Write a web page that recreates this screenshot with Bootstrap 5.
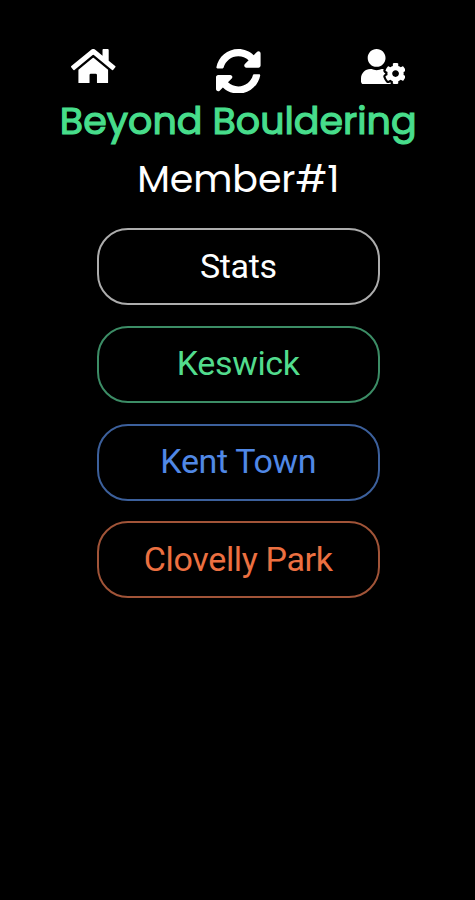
<!DOCTYPE html>
<html lang="en">
<head>
<meta charset="utf-8">
<meta name="viewport" content="width=device-width, initial-scale=1">
<title>Beyond Bouldering</title>
<link href="https://cdn.jsdelivr.net/npm/bootstrap@5.3.0/dist/css/bootstrap.min.css" rel="stylesheet">
<style>
body { background: #000; color: #fff; font-family: Roboto, sans-serif; }
main { padding-left: 1.5px; }
.top-icons { width: 334px; padding-top: 48.7px; height: 98px; }
.top-icons svg { display: block; fill: #fff; }
.brand-title, .member-name { font-family: Poppins, Inter, sans-serif; white-space: nowrap; }
.brand-title { font-size: 38px; font-weight: 400; line-height: 46px; color: #47dd8b; -webkit-text-stroke: 1.2px #47dd8b; }
.member-name { font-size: 38px; font-weight: 400; line-height: 46px; margin-top: 12px; letter-spacing: -.1px; }
.gyms { width: 283px; gap: 20.8px; margin-top: 26px; }
.gym-btn { --bs-btn-color: var(--tone); --bs-btn-border-color: var(--edge); --bs-btn-hover-color: #000; --bs-btn-hover-bg: var(--tone);
  height: 77px; border-width: 2px; border-radius: 31px; font-size: 34px; line-height: 1; letter-spacing: -.35px; }
.gym-btn span { display: block; padding-bottom: 2px; }
.tone-white { --tone: #fff; --edge: #adadad; }
.tone-green { --tone: #52dc8d; --edge: #3c8d66; }
.tone-blue { --tone: #5088e6; --edge: #3c609c; }
.tone-orange { --tone: #ec7041; --edge: #a15438; }
</style>
</head>
<body>
<main class="d-flex flex-column align-items-center min-vh-100">
  <nav class="top-icons d-flex justify-content-between align-items-start">
    <a href="#" aria-label="Home"><svg width="44.5" height="34.8" viewBox="0 32 576 448"><path d="M280.37 148.26L96 300.11V464a16 16 0 0 0 16 16l112.06-.29a16 16 0 0 0 15.92-16V368a16 16 0 0 1 16-16h64a16 16 0 0 1 16 16v95.64a16 16 0 0 0 16 16.05L464 480a16 16 0 0 0 16-16V300L295.67 148.26a12.19 12.19 0 0 0-15.3 0zM571.6 251.47L488 182.56V44.05a12 12 0 0 0-12-12h-56a12 12 0 0 0-12 12v72.61L318.47 43a48 48 0 0 0-61 0L4.34 251.47a12 12 0 0 0-1.6 16.9l25.5 31A12 12 0 0 0 45.15 301l235.22-193.74a12.19 12.19 0 0 1 15.3 0L530.9 301a12 12 0 0 0 16.9-1.6l25.5-31a12 12 0 0 0-1.7-16.93z"/></svg></a>
    <a href="#" aria-label="Refresh"><svg width="44.6" height="44.6" viewBox="8 8 496 496"><path d="M370.72 133.28C339.458 104.008 298.888 87.962 255.848 88c-77.458.068-144.328 53.178-162.791 126.85-1.344 5.363-6.122 9.15-11.651 9.15H24.103c-7.498 0-13.194-6.807-11.807-14.176C33.933 94.924 134.813 8 256 8c66.448 0 126.791 26.136 171.315 68.685L463.03 40.97C478.149 25.851 504 36.559 504 57.941V192c0 13.255-10.745 24-24 24H345.941c-21.382 0-32.09-25.851-16.971-40.971l41.75-41.749zM32 296h134.059c21.382 0 32.09 25.851 16.971 40.971l-41.75 41.75c31.262 29.273 71.835 45.319 114.876 45.28 77.418-.07 144.315-53.144 162.787-126.849 1.344-5.363 6.122-9.15 11.651-9.15h57.304c7.498 0 13.194 6.807 11.807 14.176C478.067 417.076 377.187 504 256 504c-66.448 0-126.791-26.136-171.315-68.685L48.97 471.03C33.851 486.149 8 475.441 8 454.059V320c0-13.255 10.745-24 24-24z"/></svg></a>
    <a href="#" aria-label="Account settings"><svg width="44.6" height="35.7" viewBox="0 0 640 512"><path d="M610.5 373.3c2.6-14.1 2.6-28.5 0-42.6l25.8-14.9c3-1.7 4.3-5.2 3.3-8.5-6.7-21.6-18.2-41.2-33.2-57.4-2.3-2.5-6-3.1-9-1.4l-25.8 14.9c-10.9-9.3-23.4-16.5-36.9-21.3v-29.8c0-3.4-2.4-6.4-5.7-7.1-22.3-5-45-4.8-66.2 0-3.3.7-5.7 3.7-5.7 7.1v29.8c-13.5 4.8-26 12-36.9 21.3l-25.8-14.9c-2.9-1.7-6.7-1.1-9 1.4-15 16.2-26.5 35.8-33.2 57.4-1 3.3.4 6.8 3.3 8.5l25.8 14.9c-2.6 14.1-2.6 28.5 0 42.6l-25.8 14.9c-3 1.7-4.3 5.2-3.3 8.5 6.7 21.6 18.2 41.1 33.2 57.4 2.3 2.5 6 3.1 9 1.4l25.8-14.9c10.9 9.3 23.4 16.5 36.9 21.3v29.8c0 3.4 2.4 6.4 5.7 7.1 22.3 5 45 4.8 66.2 0 3.3-.7 5.7-3.7 5.7-7.1v-29.8c13.5-4.8 26-12 36.9-21.3l25.8 14.9c2.9 1.7 6.7 1.1 9-1.4 15-16.2 26.5-35.8 33.2-57.4 1-3.3-.4-6.8-3.3-8.5l-25.8-14.9zM496 400.5c-26.8 0-48.5-21.8-48.5-48.5s21.8-48.5 48.5-48.5 48.5 21.8 48.5 48.5-21.7 48.5-48.5 48.5zM224 256c70.7 0 128-57.3 128-128S294.7 0 224 0 96 57.3 96 128s57.3 128 128 128zm201.2 226.5c-2.3-1.2-4.6-2.6-6.8-3.9l-7.9 4.6c-6 3.4-12.8 5.3-19.6 5.3-10.9 0-21.4-4.6-28.9-12.6-18.3-19.8-32.3-43.9-40.2-69.6-5.5-17.7 1.9-36.4 17.9-45.7l7.9-4.6c-.1-2.6-.1-5.2 0-7.8l-7.9-4.6c-16-9.2-23.4-28-17.9-45.7.9-2.9 2.2-5.8 3.2-8.7-3.8-.3-7.5-1.2-11.4-1.2h-16.7c-22.2 10.2-46.9 16-72.9 16s-50.6-5.8-72.9-16h-16.7C60.2 288 0 348.2 0 422.4V464c0 26.5 21.5 48 48 48h352c10.1 0 19.5-3.2 27.2-8.5-1.2-3.8-2-7.7-2-11.8v-9.2z"/></svg></a>
  </nav>
  <h1 class="brand-title mb-0 text-center">Beyond Bouldering</h1>
  <h2 class="member-name mb-0 text-center">Member#1</h2>
  <div class="gyms d-flex flex-column">
    <button type="button" class="btn gym-btn tone-white w-100 p-0"><span>Stats</span></button>
    <button type="button" class="btn gym-btn tone-green w-100 p-0"><span>Keswick</span></button>
    <button type="button" class="btn gym-btn tone-blue w-100 p-0"><span>Kent Town</span></button>
    <button type="button" class="btn gym-btn tone-orange w-100 p-0"><span>Clovelly Park</span></button>
  </div>
</main>
<script src="https://cdn.jsdelivr.net/npm/bootstrap@5.3.0/dist/js/bootstrap.bundle.min.js"></script>
</body>
</html>
